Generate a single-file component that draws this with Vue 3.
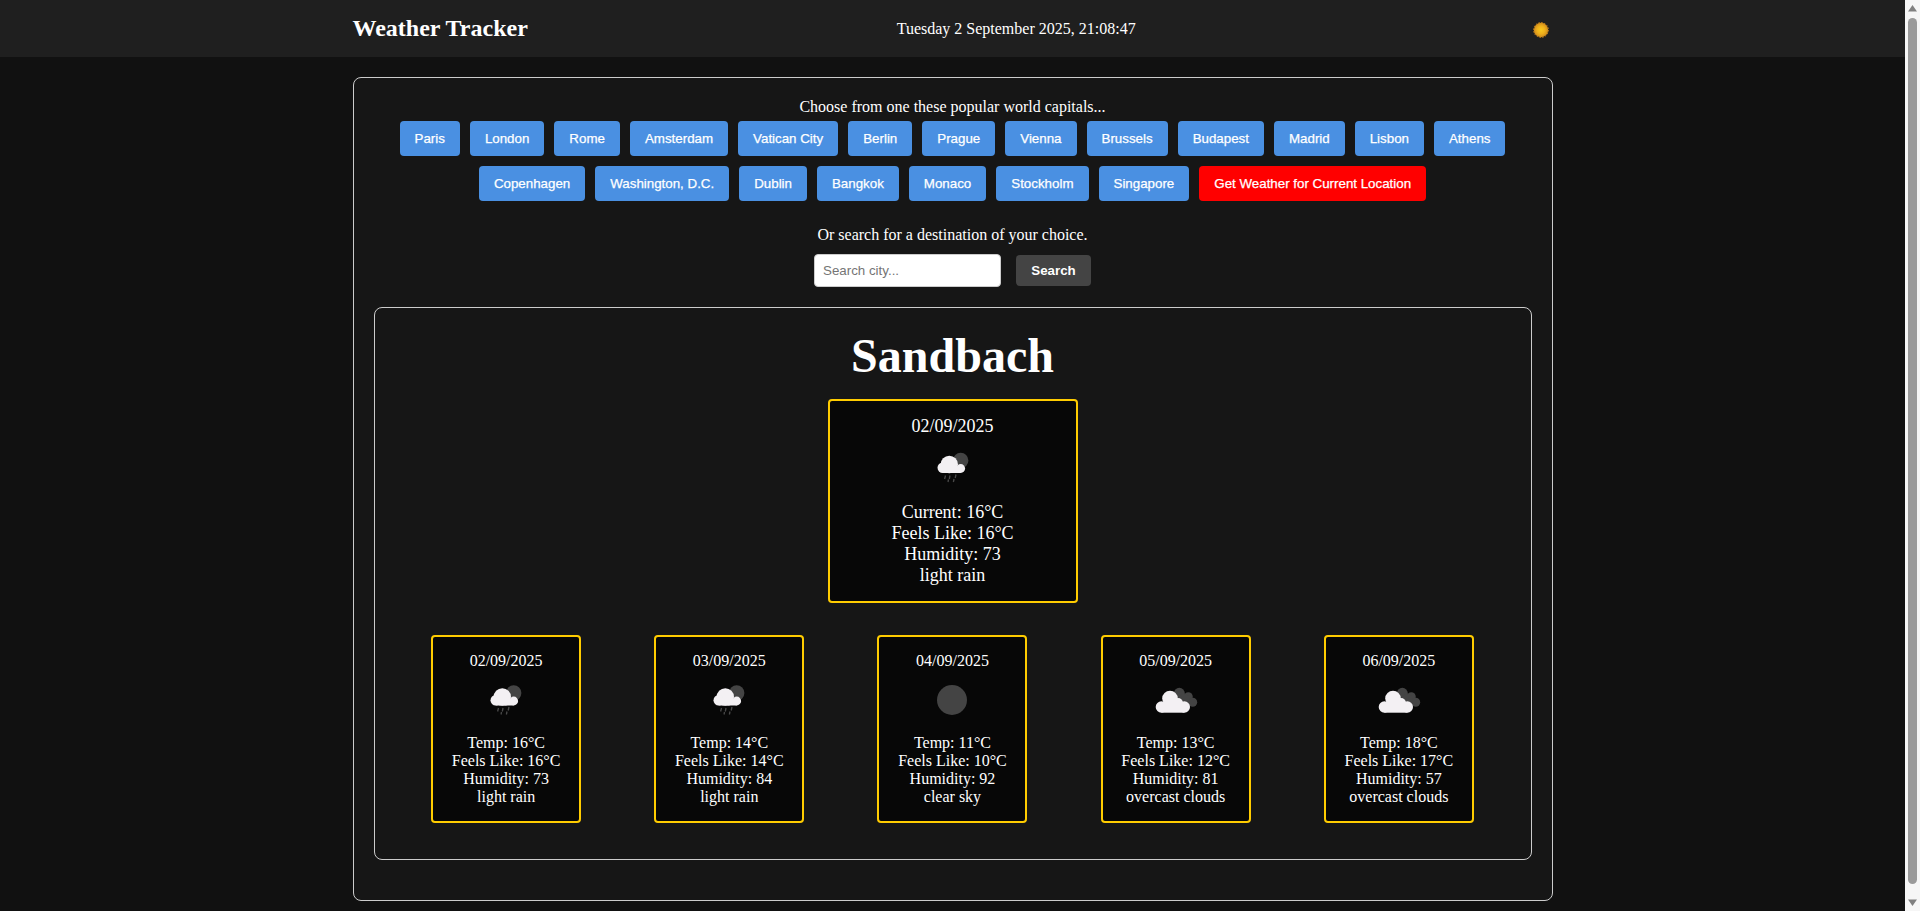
<script setup>
const capitals = ['Paris','London','Rome','Amsterdam','Vatican City','Berlin','Prague','Vienna','Brussels','Budapest','Madrid','Lisbon','Athens','Copenhagen','Washington, D.C.','Dublin','Bangkok','Monaco','Stockholm','Singapore']

const icons = {
  rain: {
    dark: [[39.7,23,7.7]],
    light: [[28.3,27,8.7],[21.7,30.3,5.2],[39.7,31,4.4],[32,31,4.4]],
    rects: [[21.7,29,18,6.5]],
    drops: [[24.5,38,23.6,41.5],[29,38,28.3,41.5],[35,37,34.2,40.5],[33,41.5,32.4,44.5],[27.5,42,27,44.5]]
  },
  clear: { dark: [[32,30,15]], light: [], rects: [], drops: [] },
  clouds: {
    dark: [[35.3,23.3,5.5],[44.3,26.7,4.5],[48.7,32.3,4.5],[40,30,6]],
    light: [[26,28.5,7.8],[17.4,37,5.7],[40.3,37,5.7],[34,33,5]],
    rects: [[17.4,33,22.9,9.7]],
    drops: []
  }
}

const forecast = [
  { date:'02/09/2025', icon:'rain', temp:16, feels:16, humidity:73, desc:'light rain' },
  { date:'03/09/2025', icon:'rain', temp:14, feels:14, humidity:84, desc:'light rain' },
  { date:'04/09/2025', icon:'clear', temp:11, feels:10, humidity:92, desc:'clear sky' },
  { date:'05/09/2025', icon:'clouds', temp:13, feels:12, humidity:81, desc:'overcast clouds' },
  { date:'06/09/2025', icon:'clouds', temp:18, feels:17, humidity:57, desc:'overcast clouds' }
]
const current = { date:'02/09/2025', icon:'rain', temp:16, feels:16, humidity:73, desc:'light rain' }

const cards = [
  { ...current, big:true, first:'Current' },
  ...forecast.map(f => ({ ...f, big:false, first:'Temp' }))
]
</script>

<template>
  <div class="page">
    <header class="topbar">
      <div class="topbar-inner">
        <div class="brand">Weather Tracker</div>
        <div class="clock">Tuesday 2 September 2025, 21:08:47</div>
        <div class="theme">
          <svg width="16" height="16" viewBox="0 0 16 16">
            <defs>
              <radialGradient id="sun">
                <stop offset="0" stop-color="#f8c81e" />
                <stop offset="0.55" stop-color="#eeb01b" />
                <stop offset="1" stop-color="#cf8a1c" />
              </radialGradient>
            </defs>
            <circle cx="8" cy="8" r="7.2" fill="url(#sun)" />
            <circle cx="8" cy="8" r="7.4" fill="none" stroke="#c8841a" stroke-width="1" stroke-dasharray="1.6 1.3" />
          </svg>
        </div>
      </div>
    </header>

    <main class="panel">
      <p class="hint">Choose from one these popular world capitals...</p>
      <div class="capitals">
        <button v-for="c in capitals" :key="c" class="btn">{{ c }}</button>
        <button class="btn btn-red">Get Weather for Current Location</button>
      </div>
      <p class="hint hint-search">Or search for a destination of your choice.</p>
      <div class="search">
        <input class="search-input" placeholder="Search city..." />
        <button class="search-btn">Search</button>
      </div>

      <section class="weather">
        <h1 class="city">Sandbach</h1>
        <template v-for="group in [cards.slice(0,1), cards.slice(1)]" :key="group.length">
          <div class="row" :class="{ 'row-current': group.length === 1 }">
            <article v-for="d in group" :key="d.date + d.first" class="card" :class="{ 'card-big': d.big }">
              <div>{{ d.date }}</div>
              <svg class="icon" width="64" height="64" viewBox="0 0 64 64">
                <circle v-for="(s,i) in icons[d.icon].dark" :key="'d'+i" :cx="s[0]" :cy="s[1]" :r="s[2]" fill="#444" />
                <circle v-for="(s,i) in icons[d.icon].light" :key="'l'+i" :cx="s[0]" :cy="s[1]" :r="s[2]" fill="#f3f0f3" />
                <rect v-for="(s,i) in icons[d.icon].rects" :key="'r'+i" :x="s[0]" :y="s[1]" :width="s[2]" :height="s[3]" fill="#f3f0f3" />
                <line v-for="(s,i) in icons[d.icon].drops" :key="'p'+i" :x1="s[0]" :y1="s[1]" :x2="s[2]" :y2="s[3]" stroke="#4a4a4a" stroke-width="1.3" />
              </svg>
              <div>{{ d.first }}: {{ d.temp }}°C</div>
              <div>Feels Like: {{ d.feels }}°C</div>
              <div>Humidity: {{ d.humidity }}</div>
              <div>{{ d.desc }}</div>
            </article>
          </div>
        </template>
      </section>
    </main>
  </div>

  <aside class="scrollbar" aria-hidden="true">
    <svg class="arrow" width="15" height="17" viewBox="0 0 15 17"><path d="M7.5 5L12 11.5H3z" fill="#808080" /></svg>
    <div class="track"><div class="thumb"></div></div>
    <svg class="arrow" width="15" height="17" viewBox="0 0 15 17"><path d="M7.5 12L12 5.5H3z" fill="#808080" /></svg>
  </aside>
</template>

<style>
html { background: #111; }
body { margin: 0; background: #111; }
</style>

<style scoped>
.page { width: 1905px; }
.scrollbar {
  position: fixed;
  top: 0;
  right: 0;
  bottom: 0;
  width: 15px;
  display: flex;
  flex-direction: column;
  background: #f6f6f6;
}
.arrow { display: block; flex: none; }
.track { flex: 1; padding: 1px 3px 10px; display: flex; }
.thumb { flex: 1; background: #9a9a9a; border-radius: 5px; }

.topbar {
  height: 57px;
  background: #1f1f1f;
  color: #fff;
  font-family: "Liberation Serif", "Times New Roman", serif;
}
.topbar-inner {
  box-sizing: border-box;
  width: 1200px;
  height: 100%;
  margin: 0 auto;
  display: flex;
  align-items: center;
  justify-content: space-between;
}
.brand { font-size: 24px; font-weight: 700; }
.clock { font-size: 16px; }
.theme {
  width: 48px;
  display: flex;
  justify-content: flex-end;
  padding-top: 2px;
}
.theme svg { margin-right: 4px; }

.panel {
  box-sizing: border-box;
  width: 1200px;
  margin: 20px auto;
  padding: 20px 20px 40px;
  border: 1px solid #ccc;
  border-radius: 8px;
  background: #161616;
  color: #fff;
  font-family: "Liberation Serif", "Times New Roman", serif;
  font-size: 16px;
  text-align: center;
}
.hint { margin: 0; line-height: 18px; }
.hint-search { margin-top: 25px; }
.capitals {
  display: flex;
  flex-wrap: wrap;
  justify-content: center;
  gap: 10px;
  margin-top: 5px;
}
.btn {
  height: 35px;
  padding: 0 15px;
  border: 0;
  border-radius: 4px;
  background: #4a90e2;
  color: #fff;
  font-family: "Liberation Sans", Arial, sans-serif;
  font-size: 13.33px;
  -webkit-text-stroke: 0.25px #fff;
}
.btn-red { background: #f00; }
.search {
  display: flex;
  align-items: center;
  justify-content: center;
  gap: 15px;
  margin-top: 10px;
}
.search-input {
  box-sizing: border-box;
  width: 187px;
  height: 33px;
  padding: 0 8px;
  border: 1px solid #ccc;
  border-radius: 4px;
  background: #fff;
  font-family: "Liberation Sans", Arial, sans-serif;
  font-size: 13.33px;
}
.search-input::placeholder { color: #757575; }
.search-btn {
  width: 75px;
  height: 31px;
  padding: 0;
  border: 0;
  border-radius: 4px;
  background: #444;
  color: #fff;
  font-family: "Liberation Sans", Arial, sans-serif;
  font-size: 13.33px;
  font-weight: 700;
}

.weather {
  margin-top: 20px;
  padding: 20px 20px 36px;
  border: 1px solid #ccc;
  border-radius: 8px;
}
.city {
  margin: 0;
  font-size: 48px;
  font-weight: 700;
  line-height: 55px;
}
.row {
  display: flex;
  justify-content: space-around;
  margin-top: 32px;
}
.row-current { justify-content: center; margin-top: 16px; }
.card {
  box-sizing: border-box;
  width: 150px;
  padding: 15px 0;
  border: 2px solid #ffcc00;
  border-radius: 4px;
  background: #070707;
  font-size: 16px;
  line-height: 18px;
}
.card-big {
  width: 250px;
  font-size: 18px;
  line-height: 21px;
}
.card-big .icon { height: 65px; }
.icon { display: block; margin: 0 auto; }
</style>
